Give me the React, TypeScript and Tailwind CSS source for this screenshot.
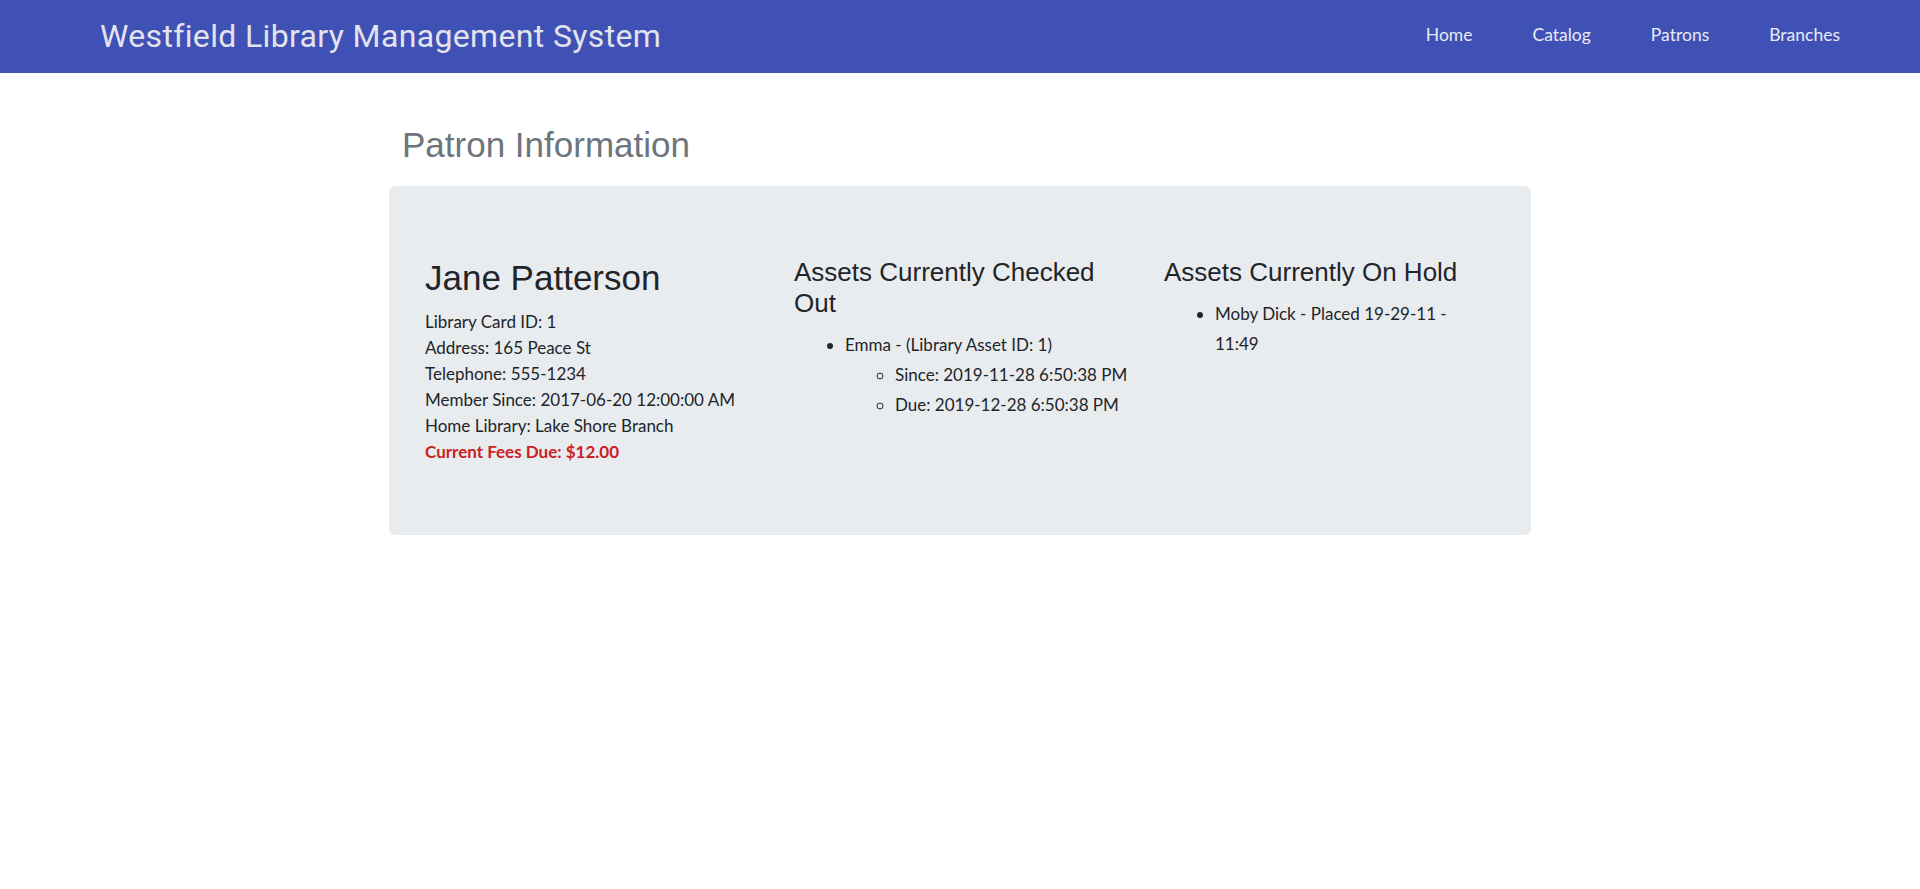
import React from "react";

export default function App() {
  return (
    <div className="min-h-screen bg-white text-[#212529] font-['Lato',sans-serif]">
      <header className="h-[73px] bg-[#3f51b5] flex items-center justify-between pl-[100px] pr-[50px]">
        <div className="text-[32px] leading-none text-[#e2e3ec] font-['Roboto',sans-serif] tracking-[0.35px] pb-[2px]">
          Westfield Library Management System
        </div>
        <nav className="flex items-center text-[17.5px] text-[#e8eaf6] font-['Lato',sans-serif] pb-[2px]">
          <a className="px-[30px]">Home</a>
          <a className="px-[30px]">Catalog</a>
          <a className="px-[30px]">Patrons</a>
          <a className="px-[30px]">Branches</a>
        </nav>
      </header>

      <main className="w-[1142px] mx-auto">
        <h1 className="mt-[53px] mb-[22px] pl-[13px] text-[35px] leading-[38px] text-[#6c757d] font-['Liberation_Sans',Arial,sans-serif]">
          Patron Information
        </h1>

        <div className="rounded-[6px] bg-[#e9ecef] pt-[71px] pb-[70px] pl-[36px] pr-[47px] grid grid-cols-[369px_370px_320px] items-start">
          <div className="pr-[49px]">
            <h2 className="text-[35px] leading-[42px] mb-[10px] font-['Liberation_Sans',Arial,sans-serif]">
              Jane Patterson
            </h2>
            <div className="text-[17px] leading-[26px]">
              <div>Library Card ID: 1</div>
              <div>Address: 165 Peace St</div>
              <div>Telephone: 555-1234</div>
              <div>Member Since: 2017-06-20 12:00:00 AM</div>
              <div>Home Library: Lake Shore Branch</div>
              <div className="font-bold text-[#c9211f]">Current Fees Due: $12.00</div>
            </div>
          </div>

          <div className="pr-[30px]">
            <h3 className="text-[26px] leading-[31.2px] mb-[11px] font-['Liberation_Sans',Arial,sans-serif]">
              Assets Currently Checked Out
            </h3>
            <ul className="list-disc pl-[51px] text-[17px] leading-[30px]">
              <li>
                Emma - (Library Asset ID: 1)
                <ul className="list-[circle] pl-[50px]">
                  <li>Since: 2019-11-28 6:50:38 PM</li>
                  <li>Due: 2019-12-28 6:50:38 PM</li>
                </ul>
              </li>
            </ul>
          </div>

          <div>
            <h3 className="text-[26px] leading-[31.2px] mb-[11px] font-['Liberation_Sans',Arial,sans-serif]">
              Assets Currently On Hold
            </h3>
            <ul className="list-disc pl-[51px] text-[17px] leading-[30px]">
              <li>Moby Dick - Placed 19-29-11 - 11:49</li>
            </ul>
          </div>
        </div>
      </main>
    </div>
  );
}
